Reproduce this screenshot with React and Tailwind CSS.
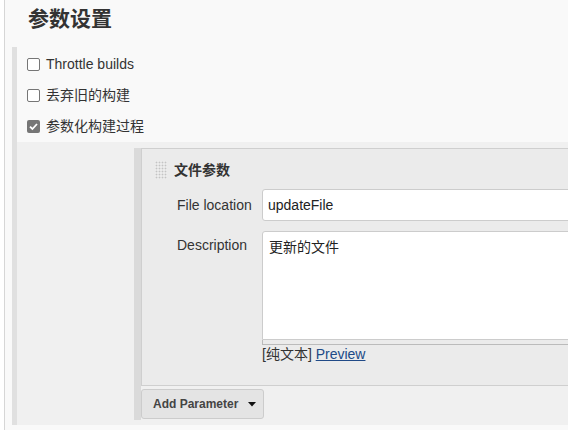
import React from 'react';

const font = { fontFamily: '"Liberation Sans", Arial, "Noto Sans CJK SC", sans-serif' };

function Checkbox({ checked }) {
  if (checked) {
    return (
      <span className="flex h-[13px] w-[13px] items-center justify-center rounded-[2px] bg-[#767676]">
        <svg width="11" height="11" viewBox="0 0 11 11">
          <path d="M2 5.6 L4.4 8 L9 3" fill="none" stroke="#fff" strokeWidth="1.8" />
        </svg>
      </span>
    );
  }
  return <span className="h-[13px] w-[13px] rounded-[2px] border border-[#767676] bg-white" />;
}

function Row({ checked, label }) {
  return (
    <div className="flex h-[31px] items-center gap-[6px] text-[14px] text-[#333]">
      <Checkbox checked={checked} />
      <span>{label}</span>
    </div>
  );
}

function Grip() {
  const dots = [];
  for (let r = 0; r < 6; r++) {
    for (let c = 0; c < 4; c++) {
      dots.push(<rect key={r + '-' + c} x={c * 3 + 0.5} y={r * 3 + 0.5} width="2" height="2" fill="#c4c4c4" />);
    }
  }
  return (
    <svg width="12" height="18" viewBox="0 0 12 18" className="shrink-0">
      <rect width="12" height="18" fill="#fafafa" />
      {dots}
    </svg>
  );
}

export default function App() {
  return (
    <div className="h-screen w-screen overflow-hidden bg-white" style={font}>
      <div className="ml-[4px] h-full w-[760px] border-l border-[#d6d6d6] bg-[#f9f9f9] pl-[7px]">
        <div className="h-[47px] pl-[16px] pt-[6px]">
          <h1 className="text-[21px] font-bold leading-[26px] text-[#333]">参数设置</h1>
        </div>

        <div className="border-l-[5px] border-[#e0e0e0]">
          <div className="pl-[10px] pt-[2px]">
            <Row label="Throttle builds" />
            <Row label="丢弃旧的构建" />
            <Row checked label="参数化构建过程" />
          </div>

          <div className="bg-[#f0f0f0] pb-[5px] pl-[117px] pt-[6px]">
            <div className="border-l-[7px] border-[#dadada] pb-[1px]">
              <div className="border-y border-l border-[#cfcfcf] bg-[#ebebeb] pb-[22px]">
                <div className="mt-[12px] flex h-[18px] items-center gap-[7px] pl-[13px]">
                  <Grip />
                  <span className="text-[14px] font-bold text-[#333]">文件参数</span>
                </div>

                <div className="mt-[10px] grid grid-cols-[85px_1fr] gap-y-[10px] pl-[35px] text-[14px]">
                  <label className="pt-[6px] leading-[20px] text-[#333]">File location</label>
                  <div className="flex h-[32px] items-center rounded-[3px] border border-[#cccccc] bg-white pl-[5px] text-[#222]">
                    updateFile
                  </div>

                  <label className="pt-[4px] leading-[20px] text-[#333]">Description</label>
                  <div>
                    <div className="h-[109px] rounded-t-[3px] border border-[#cccccc] bg-white pl-[6px] pt-[6px] leading-[18px] text-[#222]">
                      更新的文件
                    </div>
                    <div className="h-[5px] border-b border-l border-[#bbbbbb] bg-[#ebebeb]" />
                    <div className="leading-[18px] text-[#333]">
                      [纯文本]{' '}
                      <a href="#" className="text-[#204a87] underline">Preview</a>
                    </div>
                  </div>
                </div>
              </div>

              <button className="mt-[3px] flex h-[30px] w-[123px] items-center gap-[10px] rounded-[3px] border border-[#cccccc] bg-[#e4e4e4] pl-[11px] text-[12px] font-bold text-[#444]">
                <span>Add Parameter</span>
                <svg width="8" height="5" viewBox="0 0 8 5">
                  <path d="M0 0 H8 L4 4.5 Z" fill="#111" />
                </svg>
              </button>
            </div>
          </div>
        </div>
      </div>
    </div>
  );
}
